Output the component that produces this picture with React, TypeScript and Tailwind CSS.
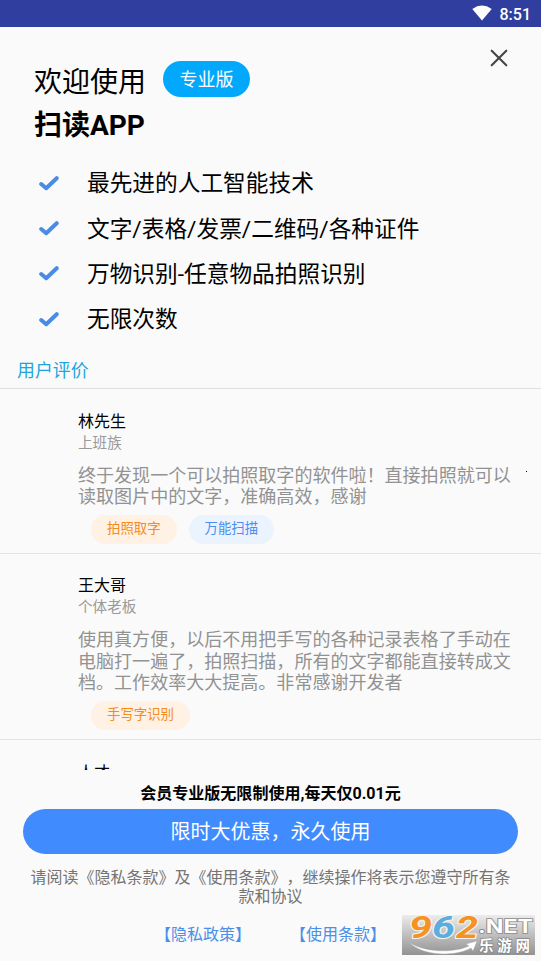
import type { ReactNode } from "react";

const features = [
  "最先进的人工智能技术",
  "文字/表格/发票/二维码/各种证件",
  "万物识别-任意物品拍照识别",
  "无限次数",
];

function Check() {
  return (
    <svg className="mb-0.5 h-5 w-5 shrink-0" viewBox="0 0 20 20" fill="none">
      <path d="M2.2 11 L7.2 15.2 L17.7 5.2" stroke="#4a8be4" strokeWidth="4" strokeLinecap="round" strokeLinejoin="round" />
    </svg>
  );
}

function Tag({ tone, children }: { tone: "orange" | "blue"; children: ReactNode }) {
  const color = tone === "orange" ? "bg-[#fff1e4] text-[#f28c1c]" : "bg-[#ebf3ff] text-[#4a8df0]";
  return <span className={`flex h-[29px] items-center rounded-full px-4 pt-px text-[13.4px] ${color}`}>{children}</span>;
}

function Review({ name, job, lines, children }: { name: string; job: string; lines: string[]; children: ReactNode }) {
  return (
    <article className="border-b border-[#e3e3e3] pt-[20.5px] pb-[9px] pl-[78px]">
      <h3 className="h-[23px] text-[16px] leading-6 text-black">{name}</h3>
      <p className="h-5 text-[14.6px] leading-5 text-[#999]">{job}</p>
      <div className="mt-[12px] text-[18.05px] leading-[21.5px] text-[#929292]">
        {lines.map((l) => (
          <p key={l}>{l}</p>
        ))}
      </div>
      <div className="mt-[7px] ml-[13px] flex gap-3">{children}</div>
    </article>
  );
}

function SiteLogo() {
  return (
    <svg className="absolute top-[912px] left-[402px] h-[43px] w-[133px]" viewBox="0 -3 133 43">
      <defs>
        <linearGradient id="plate" x1="0" y1="0" x2="0" y2="1">
          <stop offset="0" stopColor="#ececec" />
          <stop offset="1" stopColor="#929292" />
        </linearGradient>
      </defs>
      <rect width="133" height="40" fill="url(#plate)" />
      <g fontFamily="Roboto, Inter, sans-serif" fontWeight="700" fontStyle="italic" fontSize="32" strokeWidth="2.2" stroke="#f6f2ec" paintOrder="stroke" strokeLinejoin="round">
        <text x="7" y="23" textLength="23" lengthAdjust="spacingAndGlyphs" fill="#f49324">9</text>
        <text x="30" y="23" textLength="23" lengthAdjust="spacingAndGlyphs" fill="#5aaede">6</text>
        <text x="54" y="23" textLength="22" lengthAdjust="spacingAndGlyphs" fill="#f49324">2</text>
      </g>
      <text x="76" y="18" textLength="55" lengthAdjust="spacingAndGlyphs" fontFamily="Inter, Roboto, sans-serif" fontWeight="700" fontSize="18.5" fill="#fff" stroke="#8b8b8b" strokeWidth="1.6" paintOrder="stroke">.NET</text>
      <path d="M7 27 C22 38 53 38 67 31 L64 29 L75 26 L71 36 L69 33 C50 43 19 40 7 27 Z" fill="#fff" stroke="#aaa" strokeWidth=".4" />
      <text x="77" y="36" textLength="51" lengthAdjust="spacing" fontFamily="Noto Sans CJK SC, sans-serif" fontWeight="700" fontSize="14.5" fill="#fff" stroke="#858585" strokeWidth="1.4" paintOrder="stroke">乐游网</text>
    </svg>
  );
}

export default function App() {
  return (
    <div className="relative flex h-[961px] w-[541px] flex-col overflow-hidden bg-[#fafafa] font-['Roboto','Noto_Sans_CJK_SC',sans-serif] whitespace-nowrap text-black [text-spacing-trim:space-all]">
      <header className="flex h-[27px] shrink-0 items-center justify-end bg-[#303f9f] pr-[10px] text-white">
        <svg className="mr-2 mb-px h-4 w-5" viewBox="0 0 20 16">
          <path d="M0.3 4 Q10 -2.8 19.7 4 L10 15.5 Z" fill="#fff" />
        </svg>
        <span className="pt-0.5 text-[16px] leading-5 font-medium">8:51</span>
      </header>

      <section className="h-[362px] shrink-0 border-b border-[#e0e0e0]">
        <div className="flex items-start justify-between">
          <div className="pt-[34px] pl-[34px]">
            <div className="flex h-[37px] items-start">
              <h1 className="pt-[3px] text-[28px] leading-[37px]">欢迎使用</h1>
              <span className="ml-[17px] flex h-9 w-[87px] items-center justify-center rounded-full bg-[#02a8fb] pt-px text-[18px] text-white">专业版</span>
            </div>
            <h2 className="mt-[9px] h-[38px] text-[28px] leading-[38px] font-bold">扫读APP</h2>
          </div>
          <button className="mt-[22px] mr-[33px]" aria-label="关闭">
            <svg className="h-[18px] w-[18px]" viewBox="0 0 18 18">
              <path d="M1.7 1.7 L16.3 16.3 M16.3 1.7 L1.7 16.3" stroke="#454545" strokeWidth="2.1" strokeLinecap="round" />
            </svg>
          </button>
        </div>
        <ul className="mt-[16px] pl-[39px]">
          {features.map((f) => (
            <li key={f} className="flex h-[45.4px] items-center text-[22.7px] leading-8">
              <Check />
              <span className="ml-7 pt-px">{f}</span>
            </li>
          ))}
        </ul>
        <h4 className="mt-[14px] pl-[17px] text-[17.9px] leading-7 text-[#1ea5dc]">用户评价</h4>
      </section>

      <main className="h-[381px] shrink-0 overflow-hidden">
        <Review name="林先生" job="上班族" lines={["终于发现一个可以拍照取字的软件啦！直接拍照就可以", "读取图片中的文字，准确高效，感谢"]}>
          <Tag tone="orange">拍照取字</Tag>
          <Tag tone="blue">万能扫描</Tag>
        </Review>
        <Review name="王大哥" job="个体老板" lines={["使用真方便，以后不用把手写的各种记录表格了手动在", "电脑打一遍了，拍照扫描，所有的文字都能直接转成文", "档。工作效率大大提高。非常感谢开发者"]}>
          <Tag tone="orange">手写字识别</Tag>
        </Review>
        <h3 className="mt-[21px] pl-[78px] text-[16px] leading-6">人才</h3>
      </main>

      <footer className="flex flex-col items-center">
        <p className="mt-[12px] h-6 text-[16.05px] leading-6 font-bold">会员专业版无限制使用,每天仅0.01元</p>
        <button className="mt-[3px] h-[45px] w-[495px] rounded-full bg-[#408cff] pt-px text-[20px] text-white">限时大优惠，永久使用</button>
        <div className="mt-[14px] text-center text-[16px] leading-[19px] text-[#747474]">
          <p>请阅读《隐私条款》及《使用条款》，继续操作将表示您遵守所有条</p>
          <p>款和协议</p>
        </div>
        <nav className="mt-[17px] flex gap-[39px] text-[16px] leading-6 text-[#4a8fe8]">
          <a>【隐私政策】</a>
          <a>【使用条款】</a>
        </nav>
      </footer>

      <i className="absolute top-[471px] left-[526px] h-px w-px bg-black" />
      <SiteLogo />
    </div>
  );
}
